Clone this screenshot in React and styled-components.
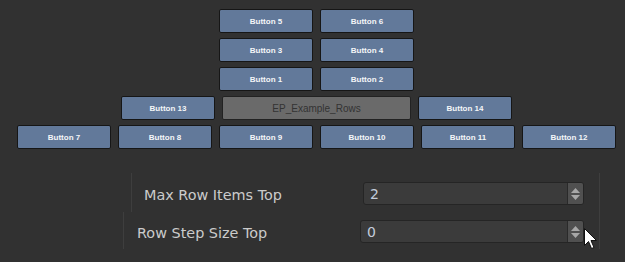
import React from 'react';
import styled, { createGlobalStyle } from 'styled-components';

const GlobalStyle = createGlobalStyle`
  html,
  body {
    margin: 0;
    padding: 0;
    background-color: #313131;
  }

  body {
    width: 625px;
    height: 262px;
    overflow: hidden;
    font-family: 'Liberation Sans', Arial, sans-serif;
  }
`;

const Page = styled.div`
  position: relative;
  width: 625px;
  height: 262px;
  padding-top: 9px;
  box-sizing: border-box;
`;

const Stack = styled.div`
  display: flex;
  flex-direction: column;
  align-items: center;
  gap: 5px;
  padding-left: 8px;
`;

const Row = styled.div`
  display: flex;
  gap: 7px;
`;

const RowButton = styled.button`
  width: 94px;
  height: 24px;
  padding: 0;
  box-sizing: border-box;
  border: 1px solid #161616;
  border-radius: 2px;
  background-color: #62799a;
  color: #f4f6f8;
  font-family: 'Liberation Sans', Arial, sans-serif;
  font-size: 8px;
  font-weight: bold;
  cursor: pointer;
`;

const TitleBox = styled.div`
  width: 189px;
  height: 24px;
  box-sizing: border-box;
  border: 1px solid #222;
  border-radius: 2px;
  background-color: #6a6a6a;
  color: #333;
  font-size: 10px;
  display: flex;
  align-items: center;
  justify-content: center;
`;

const Properties = styled.div`
  margin: 24px 0 0 123px;
  width: 476px;
  border-right: 1px solid #3e3e3e;
`;

const PropertyRow = styled.div`
  display: flex;
  align-items: center;
  margin-left: ${({ $indent }) => $indent}px;
  padding: ${({ $pt }) => $pt}px 15px ${({ $pb }) => $pb}px
    ${({ $pl }) => $pl}px;
  border-left: 1px solid #3e3e3e;
`;

const Label = styled.span`
  flex: 1;
  padding-top: 2px;
  color: #cbcbcb;
  font-family: 'DejaVu Sans', Verdana, sans-serif;
  font-size: 14.4px;
`;

const SpinBox = styled.div`
  width: ${({ $width }) => $width}px;
  height: 23px;
  box-sizing: border-box;
  display: flex;
  border: 1px solid #252525;
  border-radius: 3px;
  background-color: #3b3b3b;
  overflow: hidden;
`;

const SpinValue = styled.span`
  flex: 1;
  padding-left: 6px;
  line-height: 22px;
  color: #c3cddb;
  font-family: 'DejaVu Sans', Verdana, sans-serif;
  font-size: 14px;
`;

const SpinArrows = styled.div`
  width: 15px;
  display: flex;
  flex-direction: column;
  align-items: center;
  justify-content: center;
  gap: 2px;
  background-color: #505050;
  border-left: 1px solid #2a2a2a;
`;

const Cursor = styled.svg`
  position: absolute;
  left: 584px;
  top: 228px;
`;

const Arrow = ({ down }) => (
  <svg width="9" height="5" viewBox="0 0 9 5">
    <path d={down ? 'M0 0 H9 L4.5 5 Z' : 'M0 5 H9 L4.5 0 Z'} fill="#a8a8a8" />
  </svg>
);

const NumberField = ({ value, width }) => (
  <SpinBox $width={width}>
    <SpinValue>{value}</SpinValue>
    <SpinArrows>
      <Arrow />
      <Arrow down />
    </SpinArrows>
  </SpinBox>
);

const rows = [
  ['Button 5', 'Button 6'],
  ['Button 3', 'Button 4'],
  ['Button 1', 'Button 2'],
];

const bottomRow = [
  'Button 7',
  'Button 8',
  'Button 9',
  'Button 10',
  'Button 11',
  'Button 12',
];

const App = () => {
  return (
    <Page>
      <GlobalStyle />
      <Stack>
        {rows.map((row) => (
          <Row key={row[0]}>
            {row.map((name) => (
              <RowButton key={name} type="button">
                {name}
              </RowButton>
            ))}
          </Row>
        ))}
        <Row>
          <RowButton type="button">Button 13</RowButton>
          <TitleBox>EP_Example_Rows</TitleBox>
          <RowButton type="button">Button 14</RowButton>
        </Row>
        <Row>
          {bottomRow.map((name) => (
            <RowButton key={name} type="button">
              {name}
            </RowButton>
          ))}
        </Row>
      </Stack>
      <Properties>
        <PropertyRow $indent={8} $pl={12} $pt={9} $pb={7}>
          <Label>Max Row Items Top</Label>
          <NumberField value="2" width={221} />
        </PropertyRow>
        <PropertyRow $indent={0} $pl={13} $pt={8} $pb={6}>
          <Label>Row Step Size Top</Label>
          <NumberField value="0" width={224} />
        </PropertyRow>
      </Properties>
      <Cursor width="13" height="22" viewBox="0 0 13 22">
        <path
          d="M0.5 0.5 V17.5 L4.5 13.5 L7.5 20.5 L10 19.5 L7 12.5 H12.5 Z"
          fill="#ffffff"
          stroke="#111"
          strokeWidth="1"
        />
      </Cursor>
    </Page>
  );
};

export default App;
